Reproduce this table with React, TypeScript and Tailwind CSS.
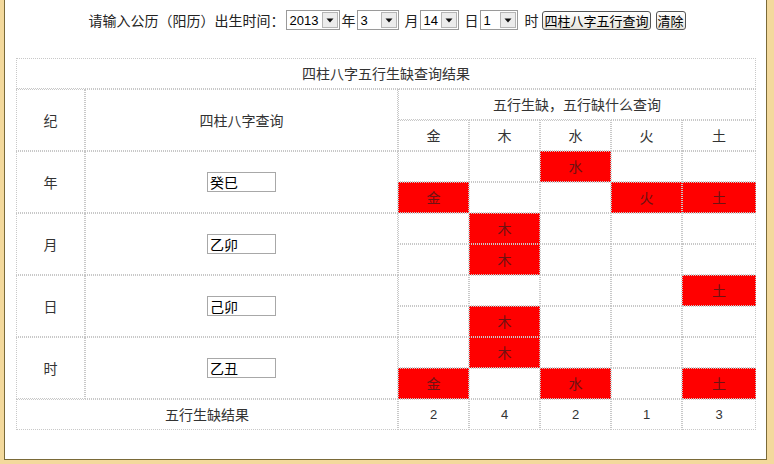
import React from "react";

const ELEMENTS = ["金", "木", "水", "火", "土"];
const PILLARS = [
  { label: "年", value: "癸巳" },
  { label: "月", value: "乙卯" },
  { label: "日", value: "己卯" },
  { label: "时", value: "乙丑" },
];
const MARKS = [
  [0, 0, 1, 0, 0],
  [1, 0, 0, 1, 1],
  [0, 1, 0, 0, 0],
  [0, 1, 0, 0, 0],
  [0, 0, 0, 0, 1],
  [0, 1, 0, 0, 0],
  [0, 1, 0, 0, 0],
  [1, 0, 1, 0, 1],
];
const COUNTS = [2, 4, 2, 1, 3];

const cell =
  "border border-dotted border-[#c8c8c8] flex items-center justify-center text-[14px] text-[#333]";

function Select({ value, width }: { value: string; width: number }) {
  return (
    <div
      className="h-[20px] border border-[#9a9a9a] bg-white flex items-center justify-between pl-[2px] pr-[1px]"
      style={{ width }}
    >
      <span className="font-['Liberation_Sans',sans-serif] text-[13px] text-black leading-none">{value}</span>
      <span className="w-[16px] h-[16px] border border-[#b5b5b5] bg-[#ececec] flex items-center justify-center">
        <svg width="8" height="5" viewBox="0 0 8 5">
          <path d="M0.5 0.5 L7.5 0.5 L4 4.5 Z" fill="#111" />
        </svg>
      </span>
    </div>
  );
}

function Btn({ children }: { children: React.ReactNode }) {
  return (
    <span className="h-[19px] border border-[#555] rounded-[3px] bg-[linear-gradient(#ffffff,#e6e4dc)] flex items-center px-[1px] text-[13px] text-black leading-none">
      {children}
    </span>
  );
}

export default function App() {
  return (
    <div className="w-[774px] h-[464px] bg-[#f3d99c] pl-[4px] font-['Noto_Sans_CJK_SC','Noto_Sans',sans-serif]">
      <div className="w-[763px] h-[460px] bg-white border-l border-r border-b border-[#7a6a38]">
        <div className="pt-[10px] pl-[3px] flex justify-center items-center h-[30px] text-[14px] text-[#222]">
          <span>请输入公历（阳历）出生时间：</span>
          <span className="ml-[2px]"><Select value="2013" width={54} /></span>
          <span className="ml-[1px]">年</span>
          <span className="ml-[2px]"><Select value="3" width={42} /></span>
          <span className="ml-[5px]">月</span>
          <span className="ml-[2px]"><Select value="14" width={39} /></span>
          <span className="ml-[5px]">日</span>
          <span className="ml-[2px]"><Select value="1" width={38} /></span>
          <span className="ml-[6px]">时</span>
          <span className="ml-[4px]"><Btn>四柱八字五行查询</Btn></span>
          <span className="ml-[5px]"><Btn>清除</Btn></span>
        </div>
        <div className="mt-[28px] ml-[11px] w-[740px] grid grid-cols-[69px_313px_71px_71px_71px_71px_74px] grid-rows-[repeat(12,31px)]">
          <div className={`${cell} col-span-7`}>四柱八字五行生缺查询结果</div>
          <div className={`${cell} row-span-2`}>纪</div>
          <div className={`${cell} row-span-2`}>四柱八字查询</div>
          <div className={`${cell} col-span-5`}>五行生缺，五行缺什么查询</div>
          {ELEMENTS.map((e) => (
            <div key={e} className={cell}>{e}</div>
          ))}
          {PILLARS.map((p, pi) => (
            <React.Fragment key={p.label}>
              <div className={`${cell} row-span-2`}>{p.label}</div>
              <div className={`${cell} row-span-2`}>
                <input
                  readOnly
                  value={p.value}
                  className="w-[69px] h-[20px] border border-[#a8a8a8] bg-white pl-[2px] text-[14px] text-black outline-none font-['Noto_Sans_CJK_SC',sans-serif]"
                />
              </div>
              {[0, 1].map((sub) =>
                MARKS[pi * 2 + sub].map((m, ci) => (
                  <div
                    key={`${sub}-${ci}`}
                    className={m ? `${cell} bg-[#ff0000] !text-[#6e1212]` : cell}
                  >
                    {m ? ELEMENTS[ci] : ""}
                  </div>
                ))
              )}
            </React.Fragment>
          ))}
          <div className={`${cell} col-span-2`}>五行生缺结果</div>
          {COUNTS.map((c, i) => (
            <div key={i} className={`${cell} font-['Liberation_Sans',sans-serif] !text-[13px]`}>{c}</div>
          ))}
        </div>
      </div>
    </div>
  );
}
